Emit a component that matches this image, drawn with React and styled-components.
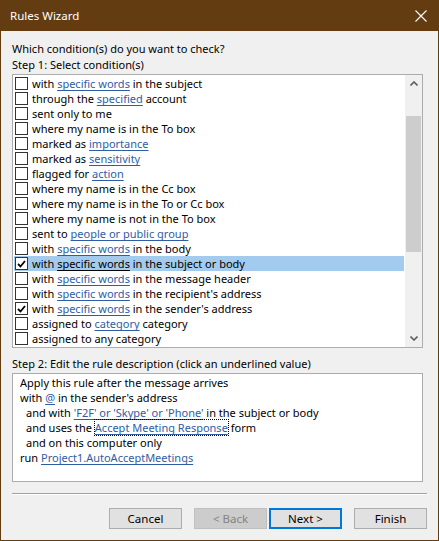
import React from "react";
import styled, { createGlobalStyle } from "styled-components";

const Global = createGlobalStyle`
  html, body { margin: 0; padding: 0; background: #f0f0f0; }
  body { font-family: "Noto Sans", "Open Sans", sans-serif; font-size: 11px; color: #000; }
  * { box-sizing: border-box; }
`;

const Window = styled.div`
  width: 439px;
  height: 541px;
  display: flex;
  flex-direction: column;
  background: #f0f0f0;
  border: 1px solid #643c12;
  border-top: none;
`;

const TitleBar = styled.div`
  height: 31px;
  margin: 0 -1px;
  background: #643c12;
  color: #fff;
  display: flex;
  align-items: center;
  justify-content: space-between;
  padding: 0 10px 0 10px;
  font-size: 11.5px;
`;

const CloseIcon = styled.svg`
  width: 12px;
  height: 12px;
  margin-right: 2px;
`;

const Body = styled.div`
  flex: 1;
  display: flex;
  flex-direction: column;
  padding: 10px 11px 0 11px;
`;

const Label = styled.div`
  line-height: 16px;
  height: 16px;
  margin-top: ${(p) => p.$mt || 0}px;
  white-space: nowrap;
`;

const ListBox = styled.div`
  margin-top: 1px;
  width: 411px;
  height: 274px;
  border: 1px solid #acacac;
  background: #fff;
  display: flex;
`;

const Rows = styled.div`
  flex: 1;
  padding: 1px 1px 0 1px;
`;

const Row = styled.div`
  height: 15px;
  display: flex;
  align-items: center;
  padding-left: 1px;
  background: ${(p) => (p.$selected ? "#a3cbee" : "transparent")};
  white-space: nowrap;
`;

const Check = styled.span`
  width: 13px;
  height: 13px;
  border: 1px solid #333;
  background: #fff;
  margin-right: 4px;
  display: flex;
  align-items: center;
  justify-content: center;
  flex: none;
`;

const RowText = styled.span`
  line-height: 15px;
  white-space: pre;
`;

const Link = styled.span`
  color: ${(p) => (p.$plain ? "#000" : "#2f5da5")};
  text-decoration: underline;
  text-underline-offset: 2px;
  text-decoration-thickness: 1px;
  text-decoration-skip-ink: none;
  ${(p) => (p.$focus ? "outline: 1px dotted #000; outline-offset: 0px;" : "")}
`;

const ScrollBar = styled.div`
  width: 17px;
  background: #f0f0f0;
  display: flex;
  flex-direction: column;
`;

const ScrollArrow = styled.div`
  height: 17px;
  display: flex;
  align-items: center;
  justify-content: center;
`;

const ScrollTrack = styled.div`
  flex: 1;
  display: flex;
  flex-direction: column;
  padding-top: 24px;
  padding-bottom: 78px;
`;

const Thumb = styled.div`
  flex: 1;
  margin: 0 1px;
  background: #cdcdcd;
`;

const DescBox = styled.div`
  margin-top: 1px;
  width: 411px;
  height: 109px;
  border: 1px solid #acacac;
  background: #fff;
  padding: 1px 7px;
`;

const DescLine = styled.div`
  line-height: 15px;
  height: 15px;
  white-space: pre;
  padding-left: ${(p) => (p.$indent ? 6 : 0)}px;
`;

const Separator = styled.div`
  margin-top: 11px;
  width: 415px;
  height: 2px;
  border-top: 1px solid #a0a0a0;
  border-bottom: 1px solid #fff;
`;

const ButtonRow = styled.div`
  margin-top: 13px;
  width: 415px;
  display: flex;
  justify-content: flex-end;
`;

const Button = styled.div`
  width: 73px;
  height: 21px;
  margin-left: ${(p) => p.$ml}px;
  background: ${(p) => (p.$disabled ? "#cccccc" : "#e1e1e1")};
  border: ${(p) => (p.$default ? "2px solid #0078d7" : p.$disabled ? "1px solid #bfbfbf" : "1px solid #adadad")};
  color: ${(p) => (p.$disabled ? "#838383" : "#000")};
  display: flex;
  align-items: center;
  justify-content: center;
  font-size: 11.5px;
`;

const CheckMark = () => (
  <svg width="9" height="8" viewBox="0 0 9 8">
    <path d="M1 4 L3.5 6.5 L8 1" fill="none" stroke="#000" strokeWidth="1.8" />
  </svg>
);

const Chevron = ({ up }) => (
  <svg width="8" height="5" viewBox="0 0 8 5">
    <path d={up ? "M0.5 4.5 L4 1 L7.5 4.5" : "M0.5 0.5 L4 4 L7.5 0.5"} fill="none" stroke="#606060" strokeWidth="1.6" />
  </svg>
);

const rows = [
  { c: false, t: ["with ", { l: "specific words" }, " in the subject"] },
  { c: false, t: ["through the ", { l: "specified" }, " account"] },
  { c: false, t: ["sent only to me"] },
  { c: false, t: ["where my name is in the To box"] },
  { c: false, t: ["marked as ", { l: "importance" }] },
  { c: false, t: ["marked as ", { l: "sensitivity" }] },
  { c: false, t: ["flagged for ", { l: "action" }] },
  { c: false, t: ["where my name is in the Cc box"] },
  { c: false, t: ["where my name is in the To or Cc box"] },
  { c: false, t: ["where my name is not in the To box"] },
  { c: false, t: ["sent to ", { l: "people or public group" }] },
  { c: false, t: ["with ", { l: "specific words" }, " in the body"] },
  { c: true, s: true, t: ["with ", { l: "specific words" }, " in the subject or body"] },
  { c: false, t: ["with ", { l: "specific words" }, " in the message header"] },
  { c: false, t: ["with ", { l: "specific words" }, " in the recipient's address"] },
  { c: true, t: ["with ", { l: "specific words" }, " in the sender's address"] },
  { c: false, t: ["assigned to ", { l: "category" }, " category"] },
  { c: false, t: ["assigned to any category"] },
];

export default function App() {
  return (
    <>
      <Global />
      <Window>
        <TitleBar>
          <span>Rules Wizard</span>
          <CloseIcon viewBox="0 0 12 12">
            <path d="M0.5 0.5 L11.5 11.5 M11.5 0.5 L0.5 11.5" stroke="#fff" strokeWidth="1.1" />
          </CloseIcon>
        </TitleBar>
        <Body>
          <Label>Which condition(s) do you want to check?</Label>
          <Label>Step 1: Select condition(s)</Label>
          <ListBox>
            <Rows>
              {rows.map((r, i) => (
                <Row key={i} $selected={r.s}>
                  <Check>{r.c && <CheckMark />}</Check>
                  <RowText>
                    {r.t.map((p, j) =>
                      typeof p === "string" ? (
                        <React.Fragment key={j}>{p}</React.Fragment>
                      ) : (
                        <Link key={j} $plain={r.s}>{p.l}</Link>
                      )
                    )}
                  </RowText>
                </Row>
              ))}
            </Rows>
            <ScrollBar>
              <ScrollArrow><Chevron up /></ScrollArrow>
              <ScrollTrack><Thumb /></ScrollTrack>
              <ScrollArrow><Chevron /></ScrollArrow>
            </ScrollBar>
          </ListBox>
          <Label $mt={8}>Step 2: Edit the rule description (click an underlined value)</Label>
          <DescBox>
            <DescLine>Apply this rule after the message arrives</DescLine>
            <DescLine>{"with "}<Link>@</Link>{" in the sender's address"}</DescLine>
            <DescLine $indent>{"and with "}<Link>'F2F' or 'Skype' or 'Phone'</Link>{" in the subject or body"}</DescLine>
            <DescLine $indent>{"and uses the "}<Link $focus>Accept Meeting Response</Link>{" form"}</DescLine>
            <DescLine $indent>and on this computer only</DescLine>
            <DescLine>{"run "}<Link>Project1.AutoAcceptMeetings</Link></DescLine>
          </DescBox>
          <Separator />
          <ButtonRow>
            <Button $ml={0}>Cancel</Button>
            <Button $ml={12} $disabled>&lt; Back</Button>
            <Button $ml={2} $default>Next &gt;</Button>
            <Button $ml={12}>Finish</Button>
          </ButtonRow>
        </Body>
      </Window>
    </>
  );
}
